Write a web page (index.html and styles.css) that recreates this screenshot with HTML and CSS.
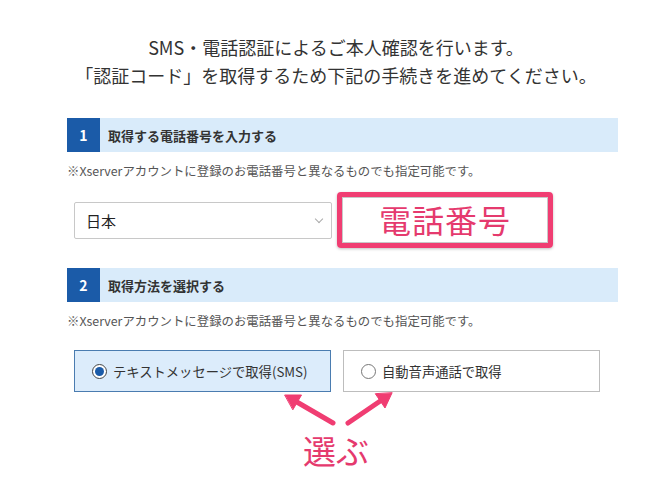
FILE: index.html
```html
<!DOCTYPE html>
<html lang="ja">
<head>
<meta charset="utf-8">
<title>SMS・電話認証</title>
<link rel="stylesheet" href="styles.css">
</head>
<body>
<div class="page">
    <p class="lead">SMS・電話認証によるご本人確認を行います。<br>「認証コード」を取得するため下記の手続きを進めてください。</p>

    <div class="form">
        <div class="step-head"><span class="step-num">1</span><span class="step-title">取得する電話番号を入力する</span></div>
        <p class="note">※Xserverアカウントに登録のお電話番号と異なるものでも指定可能です。</p>
        <div class="field-row">
            <div class="select">日本<span class="chev"></span></div>
            <div class="mark-box">電話番号</div>
        </div>

        <div class="step-head step2"><span class="step-num">2</span><span class="step-title">取得方法を選択する</span></div>
        <p class="note">※Xserverアカウントに登録のお電話番号と異なるものでも指定可能です。</p>
        <div class="options">
            <label class="option checked"><span class="radio"></span>テキストメッセージで取得(SMS)</label>
            <label class="option"><span class="radio"></span>自動音声通話で取得</label>
        </div>
    </div>

    <p class="pick">選ぶ</p>

    <!-- 矢印 -->
    <svg class="arrows" width="160" height="60" viewBox="0 0 160 60">
        <g fill="#f03d72" stroke="#f03d72" stroke-linecap="round">
            <line x1="73" y1="43" x2="36" y2="21.5" stroke-width="5"/>
            <polygon points="25,15 41.5,15 33,29.5" stroke-width="1" stroke-linejoin="round"/>
            <line x1="88" y1="43" x2="121" y2="20.5" stroke-width="5"/>
            <polygon points="132,13 125,28 115.5,14" stroke-width="1" stroke-linejoin="round"/>
        </g>
    </svg>
</div>
</body>
</html>
```

FILE: styles.css
```css
body,p{margin:0;padding:0;}
body{background:#fff;color:#333;font-family:"Noto Sans CJK JP","Noto Sans",sans-serif;}
.page{position:relative;width:672px;height:480px;overflow:hidden;}
.lead{margin-top:33px;text-align:center;font-size:18px;line-height:28px;color:#333;}
.form{padding:29px 54px 0 67px;}
.step-head{display:flex;height:34px;background:#d9ebfa;align-items:stretch;}
.step-num{width:33px;background:#1b5ba8;color:#fff;font-weight:700;font-size:14px;display:flex;align-items:center;justify-content:center;}
.step-title{padding-left:8px;font-size:13px;font-weight:700;color:#333;display:flex;align-items:center;}
.step2{margin-top:20px;}
.note{margin-top:9px;font-size:12.4px;line-height:20px;color:#555;}
.field-row{display:flex;align-items:center;gap:5px;margin-top:11px;padding-left:7px;}
.select{position:relative;box-sizing:border-box;width:258px;height:37px;border:1px solid #c8c8c8;border-radius:2px;padding-left:11px;font-size:15px;line-height:35px;color:#222;}
.chev{position:absolute;right:9px;top:13px;width:5px;height:5px;border-right:1px solid #aaa;border-bottom:1px solid #aaa;transform:rotate(45deg);}
.mark-box{box-sizing:border-box;width:216px;height:56px;border:5px solid #f03d72;border-radius:4px;box-shadow:inset 0 0 0 1px #c8c8c8,0 1px 3px rgba(0,0,0,.25);text-align:center;font-size:32px;line-height:45px;color:#e53a6e;letter-spacing:1px;}
.options{display:flex;gap:12px;margin-top:19px;padding-left:7px;}
.option{box-sizing:border-box;width:257px;height:42px;display:flex;align-items:center;padding-left:17px;border:1px solid #bdbdbd;font-size:13.3px;color:#333;}
.option.checked{background:#dcecfb;border-color:#4a7cb0;}
.radio{box-sizing:border-box;width:15px;height:15px;border:1px solid #555;border-radius:50%;background:#fff;margin-right:6px;display:flex;align-items:center;justify-content:center;}
.option .radio{border-color:#777;}
.option.checked .radio{border-color:#444;}
.option.checked .radio:after{content:"";width:9px;height:9px;border-radius:50%;background:#1b5ba8;}
.pick{margin-top:38px;text-align:center;font-size:33px;line-height:40px;color:#e53a6e;}
.arrows{position:absolute;left:260px;top:380px;}
```
